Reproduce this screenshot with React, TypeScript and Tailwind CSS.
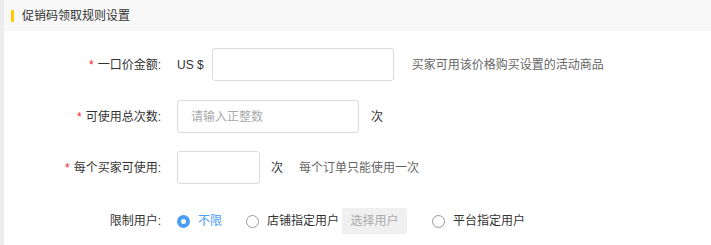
import React from 'react'

const font = { fontFamily: '"Liberation Sans", "Noto Sans CJK SC", sans-serif' }

const Label = ({ children, required }: { children: React.ReactNode; required?: boolean }) => (
  <div className="w-[159px] shrink-0 pr-[2px] text-right text-[12px] text-[#333]">
    {required && <span className="mr-[4px] text-[#f5222d]">*</span>}
    {children}
  </div>
)

const Radio = ({ checked, label }: { checked?: boolean; label: string }) => (
  <label className="flex items-center gap-[8px] text-[12px]">
    {checked ? (
      <span className="flex h-[13px] w-[13px] items-center justify-center rounded-full bg-[#4b9cf5]">
        <span className="h-[5px] w-[5px] rounded-full bg-white" />
      </span>
    ) : (
      <span className="h-[13px] w-[13px] rounded-full border border-[#9a9a9a] bg-white" />
    )}
    <span className={checked ? 'text-[#4b9cf5]' : 'text-[#333]'}>{label}</span>
  </label>
)

export default function App() {
  return (
    <div className="flex h-[245px] w-[711px] bg-white" style={font}>
      <div className="w-[4px] shrink-0 bg-[#ececec]" />
      <div className="flex-1">
        <div className="flex h-[31px] items-center gap-[8px] bg-[#f8f8f8] pl-[7px]">
          <span className="h-[12px] w-[3px] rounded-[1px] bg-[#ffcc00]" />
          <span className="text-[12px] text-[#333]">促销码领取规则设置</span>
        </div>

        <div className="flex flex-col pt-[17px]">
          <div className="flex items-center">
            <Label required>一口价金额:</Label>
            <span className="ml-[14px] text-[12px] text-[#333]">US $</span>
            <div className="ml-[8px] h-[33px] w-[182px] rounded-[3px] border border-[#dcdcdc]" />
            <span className="ml-[18px] text-[12px] text-[#666]">买家可用该价格购买设置的活动商品</span>
          </div>

          <div className="mt-[19px] flex items-center">
            <Label required>可使用总次数:</Label>
            <div className="ml-[14px] flex h-[33px] w-[182px] items-center rounded-[3px] border border-[#dcdcdc] pl-[13px] text-[12px] text-[#aaa]">
              请输入正整数
            </div>
            <span className="ml-[12px] text-[12px] text-[#333]">次</span>
          </div>

          <div className="mt-[18px] flex items-center">
            <Label required>每个买家可使用:</Label>
            <div className="ml-[14px] h-[33px] w-[83px] rounded-[3px] border border-[#dcdcdc]" />
            <span className="ml-[11px] text-[12px] text-[#333]">次</span>
            <span className="ml-[16px] text-[12px] text-[#666]">每个订单只能使用一次</span>
          </div>

          <div className="mt-[24px] flex items-center">
            <Label>限制用户:</Label>
            <div className="ml-[14px] flex items-center">
              <Radio checked label="不限" />
              <div className="ml-[24px]">
                <Radio label="店铺指定用户" />
              </div>
              <span className="ml-[3px] flex h-[26px] w-[65px] items-center justify-center rounded-[2px] bg-[#f0f0f0] text-[12px] text-[#aaa]">
                选择用户
              </span>
              <div className="ml-[25px]">
                <Radio label="平台指定用户" />
              </div>
            </div>
          </div>
        </div>
      </div>
    </div>
  )
}
